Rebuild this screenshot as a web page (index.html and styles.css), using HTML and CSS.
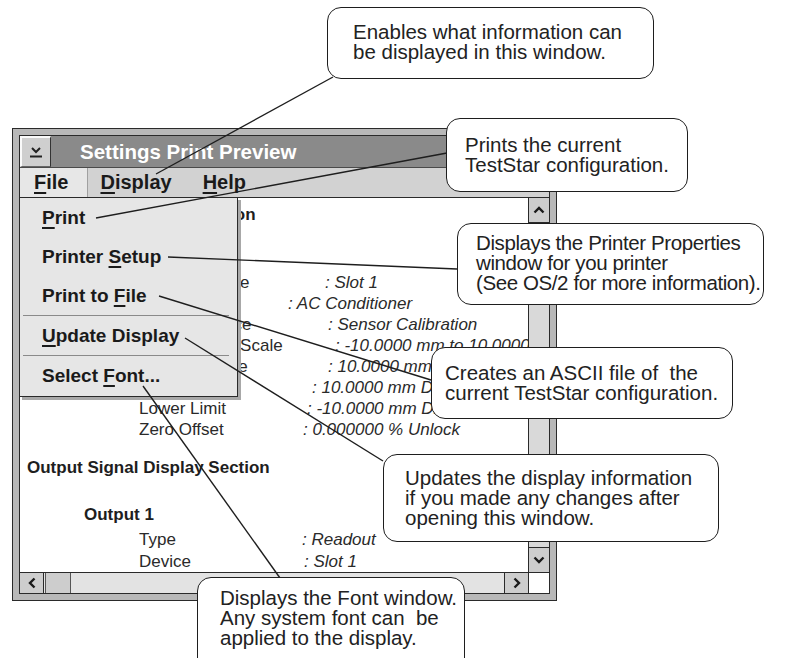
FILE: index.html
```
<!DOCTYPE html>
<html>
<head>
<meta charset="utf-8">
<title>Settings Print Preview</title>
<link rel="stylesheet" href="styles.css">
</head>
<body>
<div class="window">
  <div class="inner">
    <div class="titlebar">
      <div class="sysbtn">
        <svg width="14" height="12" viewBox="0 0 14 12"><polyline points="3,2 7,6 11,2" fill="none" stroke="#222" stroke-width="2"/><line x1="1" y1="10.5" x2="13" y2="10.5" stroke="#222" stroke-width="2"/></svg>
      </div>
      <div class="title">Settings Print Preview</div>
    </div>
    <div class="menubar">
      <span class="mi mi-file"><u>F</u>ile</span>
      <span class="mi mi-display"><u>D</u>isplay</span>
      <span class="mi mi-help"><u>H</u>elp</span>
    </div>
    <div class="main">
      <div class="content">
        <div class="sec">Input Signal Display Section</div>
        <div class="grp">Input 1</div>
        <div class="row"><span class="lbl w186">Sensor Device</span><span class="val">: Slot 1</span></div>
        <div class="row"><span class="lbl w149">Conditioner</span><span class="val">: AC Conditioner</span></div>
        <div class="row"><span class="lbl w189">Sensor Source</span><span class="val">: Sensor Calibration</span></div>
        <div class="row"><span class="lbl w196">Sensor Input Scale</span><span class="val">: -10.0000 mm to 10.0000 mm</span></div>
        <div class="row"><span class="lbl w189">Sensor Range</span><span class="val">: 10.0000 mm Displacement</span></div>
        <div class="row"><span class="lbl w173">Upper Limit</span><span class="val">: 10.0000 mm Displacement</span></div>
        <div class="row"><span class="lbl w168">Lower Limit</span><span class="val">: -10.0000 mm Displacement</span></div>
        <div class="row"><span class="lbl w164">Zero Offset</span><span class="val">: 0.000000 % Unlock</span></div>
        <div class="sec sec-out">Output Signal Display Section</div>
        <div class="grp">Output 1</div>
        <div class="row row-first"><span class="lbl w163">Type</span><span class="val">: Readout</span></div>
        <div class="row row-tight"><span class="lbl w165">Device</span><span class="val">: Slot 1</span></div>
      </div>
      <div class="vscroll">
        <div class="vbtn vbtn-up"><svg width="12" height="8" viewBox="0 0 12 8"><polyline points="1.5,6.5 6,2 10.5,6.5" fill="none" stroke="#1a1a1a" stroke-width="2.4"/></svg></div>
        <div class="vtrack"></div>
        <div class="vbtn vbtn-down"><svg width="12" height="8" viewBox="0 0 12 8"><polyline points="1.5,1.5 6,6 10.5,1.5" fill="none" stroke="#1a1a1a" stroke-width="2.4"/></svg></div>
      </div>
    </div>
    <div class="hscroll">
      <div class="hbtn hbtn-left"><svg width="8" height="12" viewBox="0 0 8 12"><polyline points="6.5,1.5 2,6 6.5,10.5" fill="none" stroke="#1a1a1a" stroke-width="2.4"/></svg></div>
      <div class="hthumb"></div>
      <div class="htrack"></div>
      <div class="hbtn hbtn-right"><svg width="8" height="12" viewBox="0 0 8 12"><polyline points="1.5,1.5 6,6 1.5,10.5" fill="none" stroke="#1a1a1a" stroke-width="2.4"/></svg></div>
      <div class="corner"></div>
    </div>
    <div class="dropdown">
      <div class="dd-item"><u>P</u>rint</div>
      <div class="dd-item">Printer <u>S</u>etup</div>
      <div class="dd-item">Print to <u>F</u>ile</div>
      <div class="dd-sep"></div>
      <div class="dd-item"><u>U</u>pdate Display</div>
      <div class="dd-sep"></div>
      <div class="dd-item">Select <u>F</u>ont...</div>
    </div>
  </div>
</div>

<svg class="leaders" width="790" height="658" viewBox="0 0 790 658">
  <g stroke="#1e1e1e" stroke-width="1.4" fill="none">
    <line x1="333" y1="77" x2="156" y2="174"/>
    <line x1="447" y1="153" x2="96" y2="218"/>
    <line x1="457" y1="269" x2="168" y2="257"/>
    <line x1="431" y1="380" x2="159" y2="296"/>
    <line x1="383" y1="461" x2="185" y2="338"/>
    <line x1="280" y1="578" x2="143" y2="386"/>
  </g>
</svg>

<div class="callout c1">Enables what information can<br>be displayed in this window.</div>
<div class="callout c2">Prints the current<br>TestStar configuration.</div>
<div class="callout c3">Displays the Printer Properties<br>window for you printer<br>(See OS/2 for more information).</div>
<div class="callout c4">Creates an ASCII file of&nbsp; the<br>current TestStar configuration.</div>
<div class="callout c5">Updates the display information<br>if you made any changes after<br>opening this window.</div>
<div class="callout c6">Displays the Font window.<br>Any system font can&nbsp; be<br>applied to the display.</div>
</body>
</html>
```

FILE: styles.css
```
* { box-sizing: border-box; }
html, body { margin: 0; padding: 0; }
body {
  width: 790px;
  height: 658px;
  overflow: hidden;
  position: relative;
  background: #fff;
  font-family: "Liberation Sans", Arial, sans-serif;
  color: #222;
}
u {
  text-decoration: underline;
  text-decoration-thickness: 2px;
  text-underline-offset: 3px;
}

/* window frame */
.window {
  margin: 128px 0 0 12px;
  width: 545px;
  height: 473px;
  border: 1px solid #2a2a2a;
  background: #b8b8b8;
  padding: 6px;
}
.inner {
  position: relative;
  height: 100%;
  border: 1px solid #2a2a2a;
  background: #fff;
  display: flex;
  flex-direction: column;
}
.titlebar {
  height: 32px;
  flex: none;
  display: flex;
  background: #8a8a8a;
  border-bottom: 1px solid #4a4a4a;
}
.sysbtn {
  width: 31px;
  flex: none;
  background: #cfcfcf;
  border-top: 2px solid #fafafa;
  border-left: 2px solid #fafafa;
  border-right: 1px solid #333;
  border-bottom: 1px solid #666;
  display: flex;
  align-items: center;
  justify-content: center;
}
.title {
  flex: 1;
  color: #fff;
  font-weight: bold;
  font-size: 20.5px;
  line-height: 31px;
  padding-left: 29px;
  white-space: nowrap;
}
.menubar {
  height: 30px;
  flex: none;
  display: flex;
  background: #d2d2d2;
  border-bottom: 1px solid #2a2a2a;
  font-weight: bold;
  font-size: 20px;
  color: #1a1a1a;
}
.mi { line-height: 29px; white-space: nowrap; }
.mi-file {
  background: #e7e7e7;
  padding: 0 19px 0 14px;
  border-right: 1px solid #a0a0a0;
}
.mi-display { margin-left: 12px; }
.mi-help { margin-left: 31px; }

.main {
  flex: 1;
  min-height: 0;
  display: flex;
}
.content {
  flex: 1;
  overflow: hidden;
  background: #fff;
  padding: 6px 0 0 7px;
  font-size: 17px;
  color: #2a2a2a;
}
.sec {
  height: 21px;
  line-height: 21px;
  font-weight: bold;
  color: #1e1e1e;
  white-space: nowrap;
}
.sec-out { margin-top: 17px; }
.grp {
  height: 21px;
  line-height: 21px;
  font-weight: bold;
  color: #1e1e1e;
  margin: 26px 0 0 57px;
}
.row {
  display: flex;
  height: 21px;
  line-height: 21px;
  padding-left: 112px;
  white-space: nowrap;
}
.row-first { margin-top: 4px; }
.row-tight { margin-top: 1px; }
.lbl { flex: none; }
.val { font-style: italic; }
.w149 { width: 149px; }
.w163 { width: 163px; }
.w164 { width: 164px; }
.w165 { width: 165px; }
.w168 { width: 168px; }
.w173 { width: 173px; }
.w186 { width: 186px; }
.w189 { width: 189px; }
.w196 { width: 196px; }

/* scrollbars */
.vscroll {
  width: 21px;
  flex: none;
  border-left: 1px solid #2a2a2a;
  background: #d9d9d9;
  display: flex;
  flex-direction: column;
}
.vbtn {
  height: 25px;
  flex: none;
  background: #cdcdcd;
  display: flex;
  align-items: center;
  justify-content: center;
}
.vbtn-up { border-bottom: 1px solid #2a2a2a; }
.vbtn-down { border-top: 1px solid #2a2a2a; }
.vtrack { flex: 1; }

.hscroll {
  height: 21px;
  flex: none;
  display: flex;
  border-top: 1px solid #2a2a2a;
  background: #e3e3e3;
}
.hbtn {
  width: 24px;
  flex: none;
  background: #cdcdcd;
  display: flex;
  align-items: center;
  justify-content: center;
}
.hbtn-left { border-right: 1px solid #2a2a2a; }
.hbtn-right { border-left: 1px solid #2a2a2a; }
.hthumb {
  width: 26px;
  flex: none;
  margin-left: 1px;
  background: #cdcdcd;
  border-left: 1px solid #555;
  border-right: 1px solid #555;
}
.htrack { flex: 1; }
.corner {
  width: 21px;
  flex: none;
  background: #fff;
  border-left: 1px solid #2a2a2a;
}

/* pulled-down File menu */
.dropdown {
  position: absolute;
  left: -1px;
  top: 61px;
  width: 219px;
  border: 1px solid #2a2a2a;
  background: #e6e6e6;
  box-shadow: 3px 3px 0 #a8a8a8;
  font-weight: bold;
  font-size: 19px;
  color: #1a1a1a;
  padding-bottom: 1px;
}
.dd-item {
  height: 39px;
  line-height: 39px;
  padding-left: 22px;
  white-space: nowrap;
}
.dd-sep {
  border-top: 1px solid #8a8a8a;
  margin: 0 8px 0 3px;
}

/* annotation layer */
.leaders {
  position: absolute;
  left: 0;
  top: 0;
}
.callout {
  position: absolute;
  border: 1.5px solid #1e1e1e;
  border-radius: 14px;
  background: #fff;
  font-size: 20.5px;
  line-height: 20px;
  color: #222;
  white-space: nowrap;
}
.c1 { left: 327px; top: 7px; width: 327px; height: 72px; padding: 14px 0 0 25px; }
.c2 { left: 446px; top: 118px; width: 242px; height: 74px; padding: 16px 0 0 18px; }
.c3 { left: 457px; top: 223px; width: 307px; height: 82px; padding: 9px 0 0 18px; letter-spacing: -0.4px; }
.c4 { left: 431px; top: 347px; width: 302px; height: 72px; padding: 15px 0 0 13px; }
.c5 { left: 383px; top: 454px; width: 336px; height: 88px; padding: 13px 0 0 21px; }
.c6 { left: 197px; top: 577px; width: 268px; height: 100px; padding: 10px 0 0 22px; }
```
